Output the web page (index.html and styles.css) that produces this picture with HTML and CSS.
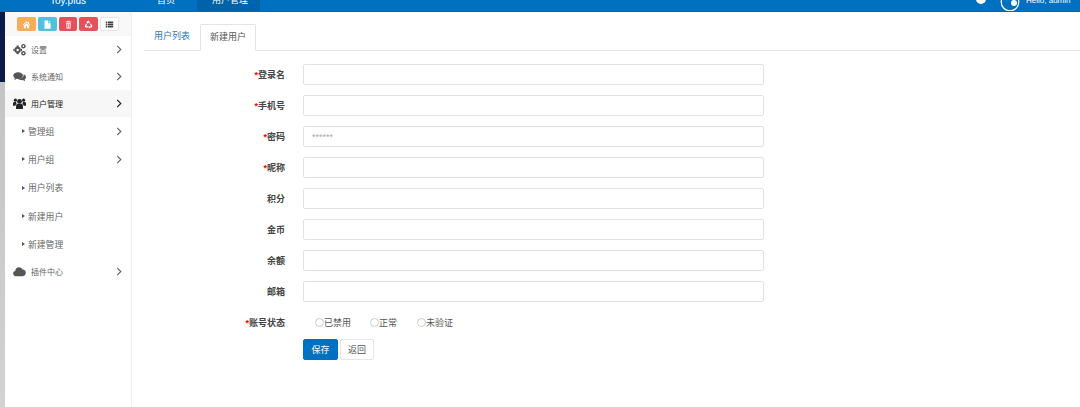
FILE: index.html
```html
<!DOCTYPE html>
<html lang="zh-CN">
<head>
<meta charset="utf-8">
<title>新建用户</title>
<link rel="stylesheet" href="styles.css">
</head>
<body>
<header class="topbar">
  <div class="brand">Toy.plus</div>
  <nav class="topnav">
    <span class="topnav-item">首页</span>
    <span class="topnav-item active">用户管理</span>
  </nav>
  <div class="topright">
    <svg class="bell" viewBox="0 0 12 12"><circle cx="6" cy="-1" r="5" fill="#fff"/></svg>
    <svg class="avatar" viewBox="0 0 20 12"><circle cx="10" cy="2" r="8.800" fill="none" stroke="#fff" stroke-width="1.200"/><circle cx="14" cy="3" r="3" fill="#fff"/></svg>
    <span class="username">Hello, admin</span>
  </div>
</header>
<div class="main">
  <div class="strip"></div>
  <aside class="sidebar">
    <div class="toolbar">
      <span class="tb orange"><svg viewBox="0 0 12 12"><path d="M6 1.800.8 6.300l.6.700L6 3.200 10.600 7l.6-.7-2-1.700V2.400H8v1.200L6 1.800ZM2.500 7.200V11h2.700V8h1.600v3h2.700V7.200L6 4.200 2.500 7.200Z" fill="#fff"/></svg></span>
      <span class="tb cyan"><svg viewBox="0 0 12 12"><path d="M2 .5h4.800v3.700h3.400v7.300H2V.5Zm5.800.2 2.300 2.500H7.800V.7Z" fill="#fff"/></svg></span>
      <span class="tb red narrow"><svg viewBox="0 0 12 12"><path d="M4.500 1h3l.4 1h2v1H2.100V2h2l.4-1ZM2.800 3.800h6.400L8.700 11.500H3.300L2.800 3.800Zm1.700 1.500v4.800h.8V5.300h-.8Zm2.200 0v4.800h.8V5.300h-.8Z" fill="#fff" fill-opacity=".8" fill-rule="evenodd"/></svg></span>
      <span class="tb red"><svg viewBox="0 0 12 12"><path d="M6 .8 8.200 4 7 4.800 5.800 3 4.700 4.900 3 4l1.700-2.800L6 .8ZM9.300 4.700l1.900 3.400-1 1.800H8.200V8.300h1.200L8 5.600l1.300-.9ZM2.700 5.100l1.500.9L3 8.200h2.200v1.700H2L.9 8.100l1.800-3Zm3.800 2.700 2 1.800-2 1.900V10H6V8.300h.5v-.5Z" fill="#fff"/></svg></span>
      <span class="tb plain"><svg viewBox="0 0 12 12"><path d="M1 2h2v2.200H1Zm2.800 0H11v2.200H3.800ZM1 4.900h2v2.200H1Zm2.800 0H11v2.200H3.800ZM1 7.800h2V10H1Zm2.800 0H11V10H3.800Z" fill="#444"/></svg></span>
    </div>
    <ul class="menu">
      <li class="item top">
        <svg class="ico" viewBox="0 0 14 14"><g fill="#555"><circle cx="5" cy="7.500" r="3.400"/><path d="M4 2.800h2l.3 1.500H3.700ZM4 12.200h2l.3-1.500H3.700ZM.3 6.500v2l1.500.3V6.200ZM9.700 6.500v2l-1.500.3V6.200Z"/><circle cx="11.200" cy="3.400" r="2.400"/><circle cx="11.200" cy="11" r="2.400"/></g><circle cx="5" cy="7.500" r="1.300" fill="#fff"/><circle cx="11.200" cy="3.400" r=".9" fill="#fff"/><circle cx="11.200" cy="11" r=".9" fill="#fff"/></svg>
        <span class="label">设置</span><svg class="chev" viewBox="0 0 6 10"><path d="M1 1l4 4-4 4" fill="none" stroke="currentColor" stroke-width="1.300"/></svg>
      </li>
      <li class="item top">
        <svg class="ico" viewBox="0 0 14 14"><ellipse cx="5.500" cy="6" rx="5.200" ry="3.700" fill="#555"/><path d="M2 8.500 1.500 11l3-2Z" fill="#555"/><path d="M11.400 4.700c1.600.7 2.600 1.900 2.600 3.200 0 1-.6 1.900-1.500 2.500l.6 1.800-2.600-1.300c-2 .2-4-.3-5-1.500 3.200.2 6.600-1.500 5.900-4.700Z" fill="#555"/></svg>
        <span class="label">系统通知</span><svg class="chev" viewBox="0 0 6 10"><path d="M1 1l4 4-4 4" fill="none" stroke="currentColor" stroke-width="1.300"/></svg>
      </li>
      <li class="item top current">
        <svg class="ico" viewBox="0 0 14 14"><g fill="#222"><circle cx="7" cy="4.800" r="2.600"/><path d="M3.300 13V9.600c0-1.400 1-2.200 2-2.200h3.400c1 0 2 .8 2 2.200V13Z"/><circle cx="2.600" cy="3.400" r="1.700"/><circle cx="11.400" cy="3.400" r="1.700"/><path d="M0 9.300V7c0-1 .7-1.700 1.500-1.700h1.900c-.2.900.2 1.500.6 2-.8.300-1.300 1-1.400 2H0ZM14 9.300V7c0-1-.7-1.700-1.500-1.700h-1.900c.2.900-.2 1.500-.6 2 .8.300 1.300 1 1.400 2H14Z"/></g></svg>
        <span class="label">用户管理</span><svg class="chev" viewBox="0 0 6 10"><path d="M1 1l4 4-4 4" fill="none" stroke="currentColor" stroke-width="1.300"/></svg>
      </li>
      <li class="item sub"><i class="caret"></i><span class="label">管理组</span><svg class="chev" viewBox="0 0 6 10"><path d="M1 1l4 4-4 4" fill="none" stroke="currentColor" stroke-width="1.300"/></svg></li>
      <li class="item sub"><i class="caret"></i><span class="label">用户组</span><svg class="chev" viewBox="0 0 6 10"><path d="M1 1l4 4-4 4" fill="none" stroke="currentColor" stroke-width="1.300"/></svg></li>
      <li class="item sub"><i class="caret"></i><span class="label">用户列表</span></li>
      <li class="item sub"><i class="caret"></i><span class="label">新建用户</span></li>
      <li class="item sub"><i class="caret"></i><span class="label">新建管理</span></li>
      <li class="item top">
        <svg class="ico" viewBox="0 0 14 14"><path d="M3.200 12C1.400 12 .2 10.700.2 9.200c0-1.400 1-2.500 2.200-2.700C2.500 4.200 4.300 2.500 6.500 2.500c1.700 0 3.100 1 3.800 2.400 2-.2 3.500 1.200 3.500 3.500 0 2.100-1.500 3.600-3.300 3.600H3.200Z" fill="#555"/></svg>
        <span class="label">插件中心</span><svg class="chev" viewBox="0 0 6 10"><path d="M1 1l4 4-4 4" fill="none" stroke="currentColor" stroke-width="1.300"/></svg>
      </li>
    </ul>
  </aside>
  <main class="content">
    <div class="tabs">
      <a class="tab">用户列表</a>
      <a class="tab active">新建用户</a>
    </div>
    <form class="form">
      <div class="row"><label class="req">登录名</label><input class="field" type="text"></div>
      <div class="row"><label class="req">手机号</label><input class="field" type="text"></div>
      <div class="row"><label class="req">密码</label><input class="field" type="text" placeholder="******"></div>
      <div class="row"><label class="req">昵称</label><input class="field" type="text"></div>
      <div class="row"><label>积分</label><input class="field" type="text"></div>
      <div class="row"><label>金币</label><input class="field" type="text"></div>
      <div class="row"><label>余额</label><input class="field" type="text"></div>
      <div class="row"><label>邮箱</label><input class="field" type="text"></div>
      <div class="row radios">
        <label class="req">账号状态</label>
        <div class="radio-group">
          <span class="radio r1"><i></i>已禁用</span>
          <span class="radio r2"><i></i>正常</span>
          <span class="radio r3"><i></i>未验证</span>
        </div>
      </div>
      <div class="actions">
        <button class="btn primary" type="button">保存</button>
        <button class="btn" type="button">返回</button>
      </div>
    </form>
  </main>
</div>
</body>
</html>
```

FILE: styles.css
```css
* { box-sizing: border-box; }
html, body { margin: 0; padding: 0; height: 100%; overflow: hidden; }
body {
  font-family: "Liberation Sans", "Noto Sans CJK SC", sans-serif;
  font-size: 9px;
  color: #555;
  background: #fff;
  display: flex;
  flex-direction: column;
}
.topbar {
  height: 12px;
  flex: none;
  background: #0070c0;
  display: flex;
  overflow: hidden;
  color: #fff;
  border-bottom: 1px solid #0068b4;
}
.brand {
  width: 142px;
  padding-left: 50px;
  text-align: left;
  font-size: 10px;
  line-height: 1px;
}
.topnav { display: flex; }
.topnav-item {
  display: block;
  width: 55px;
  padding-left: 15px;
  text-align: left;
  line-height: 1px;
  font-size: 9px;
}
.topnav-item.active { background: #0062a8; width: 63px; padding-left: 15px; }
.topright { margin-left: auto; display: flex; align-items: flex-start; }
.bell { width: 12px; height: 12px; margin-right: 13px; }
.avatar { width: 20px; height: 12px; margin-right: 6px; }
.username { width: 54px; line-height: 1px; font-size: 8px; }
.main { flex: 1; display: flex; min-height: 0; }
.strip {
  width: 5px;
  flex: none;
  background: linear-gradient(#0a1a4a 0, #0a1a4a 70px, #c4c4c4 70px, #d2d2d2 100%);
}
.sidebar {
  width: 127px;
  flex: none;
  background: #fff;
  border-right: 1px solid #f0f0f0;
}
.toolbar {
  height: 24px;
  display: flex;
  align-items: center;
  gap: 2px;
  padding-left: 12px;
  background: #f8f8f8;
}
.tb {
  width: 19px;
  height: 14px;
  border-radius: 2px;
  display: flex;
  align-items: center;
  justify-content: center;
}
.tb svg { width: 9px; height: 9px; }
.orange { background: #f6ad55; }
.cyan { background: #4fc1de; }
.red { background: #e3515a; }
.narrow { width: 18px; }
.plain { background: #fff; border: 1px solid #e6e6e6; }
.menu { list-style: none; margin: 0; padding: 0; }
.item {
  display: flex;
  align-items: center;
  padding-right: 9px;
  color: #666;
  font-size: 8px;
}
.top { height: 27px; padding-left: 8px; }
.sub { height: 28.300px; padding-left: 17px; font-size: 8.800px; }
.current { background: #f7f7f7; color: #222; }
.ico { width: 13px; height: 13px; margin-right: 5px; flex: none; }
.label { flex: 1; }
.chev { width: 6px; height: 9px; color: #666; flex: none; }
.current .chev { color: #222; }
.caret {
  width: 0;
  height: 0;
  border-left: 3px solid #555;
  border-top: 2.500px solid transparent;
  border-bottom: 2.500px solid transparent;
  margin-right: 3px;
}
.content { flex: 1; padding: 12px 0 0 12px; min-width: 0; }
.tabs {
  height: 27px;
  display: flex;
  border-bottom: 1px solid #e4e4e4;
}
.tab {
  width: 56px;
  height: 27px;
  line-height: 25px;
  text-align: center;
  color: #2a76b8;
  font-size: 9px;
}
.tab.active {
  color: #555;
  background: #fff;
  border: 1px solid #e4e4e4;
  border-bottom-color: #fff;
  border-radius: 2px 2px 0 0;
}
.form { padding-top: 13px; }
.row { display: flex; align-items: center; height: 21px; margin-bottom: 10px; }
.row label {
  width: 141px;
  text-align: right;
  font-weight: 700;
  font-size: 9px;
  color: #444;
  margin-right: 18px;
}
.req::before { content: "*"; color: #f00; }
.field {
  width: 461px;
  height: 21px;
  padding: 0 8px;
  border: 1px solid #e2e2e2;
  border-radius: 2px;
  background: #fff;
  font-size: 9px;
  font-family: inherit;
  outline: none;
}
.field::placeholder { color: #aaa; }
.radios { margin-bottom: 6px; height: 21px; }
.radio-group { display: flex; padding-left: 12px; font-size: 9px; color: #555; }
.radio { display: flex; align-items: center; }
.radio i {
  width: 9px;
  height: 9px;
  border: 1px solid #ccc;
  border-radius: 50%;
  background: #fff;
}
.r1 { width: 55px; }
.r2 { width: 47px; }
.btn {
  width: 34px;
  height: 21px;
  padding: 0;
  border: 1px solid #e6e6e6;
  border-radius: 2px;
  background: #fff;
  color: #555;
  font-size: 9px;
  font-family: inherit;
  margin-right: 2px;
}
.btn.primary { background: #0070c0; border-color: #0070c0; color: #fff; width: 35px; }
.actions { padding-left: 159px; display: flex; }
```
